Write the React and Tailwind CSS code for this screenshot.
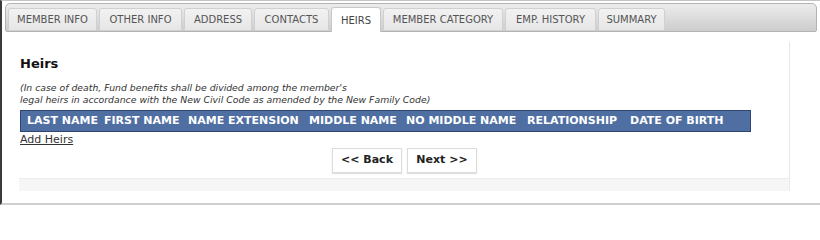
import React from "react";

const tabs = [
  { label: "MEMBER INFO", w: "w-[89px]" },
  { label: "OTHER INFO", w: "w-[83px]" },
  { label: "ADDRESS", w: "w-[68px]" },
  { label: "CONTACTS", w: "w-[75px]" },
  { label: "HEIRS", w: "w-[50px]", active: true },
  { label: "MEMBER CATEGORY", w: "w-[120px]" },
  { label: "EMP. HISTORY", w: "w-[91px]" },
  { label: "SUMMARY", w: "w-[67px]" },
];

const cols = [
  { label: "LAST NAME", w: "w-[77px]" },
  { label: "FIRST NAME", w: "w-[84px]" },
  { label: "NAME EXTENSION", w: "w-[121px]" },
  { label: "MIDDLE NAME", w: "w-[97px]" },
  { label: "NO MIDDLE NAME", w: "w-[121px]" },
  { label: "RELATIONSHIP", w: "w-[103px]" },
  { label: "DATE OF BIRTH", w: "w-[114px]" },
];

export default function App() {
  return (
    <div className="w-[820px] h-[205px] overflow-hidden bg-white border-l-2 border-l-[#3a3a3a] border-t border-t-[#c4c4c4] border-b-2 border-b-[#cfcfcf] pt-[2px] pl-[3px] pr-[3px] font-['DejaVu_Sans',sans-serif] text-[#222] flex flex-col">
      <div className="h-[29px] shrink-0 rounded-t-[5px] rounded-b-[2px] border border-[#b3b3b3] bg-gradient-to-b from-[#ececec] to-[#cdcdcd] flex items-end gap-[2px] pl-[2px]">
        {tabs.map((t) => (
          <div
            key={t.label}
            className={
              t.active
                ? `${t.w} h-[25px] mb-[-1px] rounded-t-[3px] border border-[#c8c8c8] border-b-0 bg-white flex items-center justify-center text-[10px] text-[#444]`
                : `${t.w} h-[23px] rounded-t-[3px] border border-[#d0d0d0] bg-gradient-to-b from-[#f2f2f2] to-[#e6e6e6] flex items-center justify-center text-[10px] text-[#555]`
            }
          >
            {t.label}
          </div>
        ))}
      </div>
      <div className="flex-1 flex flex-col pl-[14px] pr-[27px] pt-[10px]">
        <div className="h-[136px] border-r border-r-[#e6e6e6] pl-[1px] pt-[14px] flex flex-col">
          <div className="text-[13px] font-bold leading-[16px] text-[#111]">Heirs</div>
          <div className="mt-[10px] text-[9.3px] italic leading-[12px] text-[#333] whitespace-nowrap">
            (In case of death, Fund benefits shall be divided among the member's
            <br />
            legal heirs in accordance with the New Civil Code as amended by the New Family Code)
          </div>
          <div className="mt-[4px] w-[731px] h-[22px] shrink-0 bg-[#4f6fa2] border border-[#2f4770] flex items-center pl-[6px] text-[11px] font-bold text-white whitespace-nowrap">
            {cols.map((c) => (
              <div key={c.label} className={c.w}>
                {c.label}
              </div>
            ))}
          </div>
          <div className="mt-[1px] text-[11px] leading-[14px] underline text-[#333] w-fit">Add Heirs</div>
          <div className="mt-[1px] flex justify-center gap-[5px]">
            <button className="w-[70px] h-[25px] border border-[#dcdcdc] bg-white shadow-[0_1px_1px_rgba(0,0,0,0.12)] text-[11px] font-bold text-[#222]">
              &lt;&lt; Back
            </button>
            <button className="w-[70px] h-[25px] border border-[#dcdcdc] bg-white shadow-[0_1px_1px_rgba(0,0,0,0.12)] text-[11px] font-bold text-[#222]">
              Next &gt;&gt;
            </button>
          </div>
        </div>
        <div className="h-[13px] bg-[#f6f6f6] border-t border-t-[#ececec] border-r border-r-[#ececec]" />
      </div>
    </div>
  );
}
